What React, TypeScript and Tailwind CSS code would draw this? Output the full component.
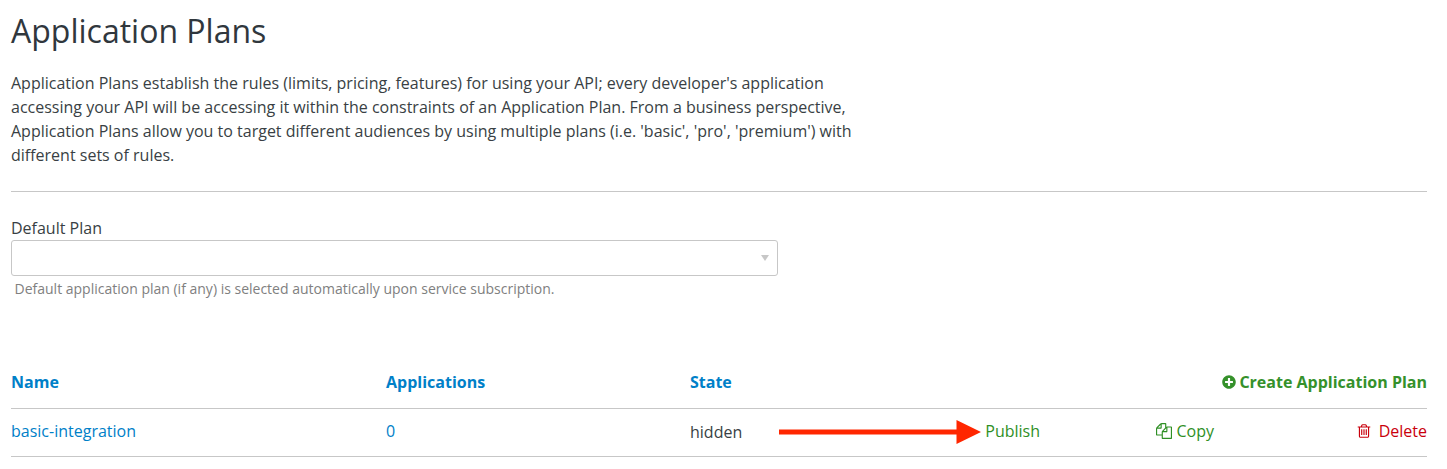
import React from 'react';
import { FaPlusCircle } from 'react-icons/fa';

function CopyIcon() {
  return (
    <svg className="size-4" viewBox="0 0 1792 1792" fill="currentColor" aria-hidden="true">
      <path d="M1696 384q40 0 68 28t28 68v1216q0 40-28 68t-68 28h-960q-40 0-68-28t-28-68v-288h-544q-40 0-68-28t-28-68v-672q0-40 20-88t48-76l408-408q28-28 76-48t88-20h416q40 0 68 28t28 68v328q68-40 128-40h416zm-544 213l-299 299h299v-299zm-640-384l-299 299h299v-299zm196 647l316-316v-416h-384v416q0 40-28 68t-68 28h-416v640h512v-256q0-40 20-88t48-76zm956 804v-1152h-384v416q0 40-28 68t-68 28h-416v640h896z" />
    </svg>
  );
}

function TrashIcon() {
  return (
    <svg className="size-4" viewBox="0 0 1792 1792" fill="currentColor" aria-hidden="true">
      <path d="M704 736v576q0 14-9 23t-23 9h-64q-14 0-23-9t-9-23v-576q0-14 9-23t23-9h64q14 0 23 9t9 23zm256 0v576q0 14-9 23t-23 9h-64q-14 0-23-9t-9-23v-576q0-14 9-23t23-9h64q14 0 23 9t9 23zm256 0v576q0 14-9 23t-23 9h-64q-14 0-23-9t-9-23v-576q0-14 9-23t23-9h64q14 0 23 9t9 23zm128 724v-948h-896v948q0 22 7 40.500t14.500 27 10.500 8.500h832q3 0 10.500-8.500t14.500-27 7-40.500zm-672-1076h448l-48-117q-7-9-17-11h-317q-10 2-17 11zm928 32v64q0 14-9 23t-23 9h-96v948q0 83-47 143.500t-113 60.500h-832q-66 0-113-58.500t-47-141.500v-952h-96q-14 0-23-9t-9-23v-64q0-14 9-23t23-9h309l70-167q15-37 54-63t79-26h320q40 0 79 26t54 63l70 167h309q14 0 23 9t9 23z" />
    </svg>
  );
}

export default function App() {
  return (
    <main className="h-[469px] overflow-hidden bg-white pl-[11px] pr-5 pt-2 font-['Open_Sans',sans-serif] text-base leading-6 text-[#393f44]">
      <h1 className="h-[63px] text-[32px] leading-[46px] text-[#30373d]">Application Plans</h1>
      <p className="whitespace-nowrap">
        Application Plans establish the rules (limits, pricing, features) for using your API; every developer's application<br />
        accessing your API will be accessing it within the constraints of an Application Plan. From a business perspective,<br />
        Application Plans allow you to target different audiences by using multiple plans (i.e. 'basic', 'pro', 'premium') with<br />
        different sets of rules.
      </p>
      <hr className="mt-6 border-[#c7c7c7]" />
      <label className="mt-6 block">Default Plan</label>
      <div className="flex h-9 w-[767px] items-center justify-end rounded-[3px] border border-[#c7c7c7] pr-2">
        <svg className="h-[6px] w-2" viewBox="0 0 8 6" aria-hidden="true"><path d="M0 0h8L4 6z" fill="#c7c7c7" /></svg>
      </div>
      <p className="ml-[3.5px] text-sm leading-[26px] text-[#808080]">Default application plan (if any) is selected automatically upon service subscription.</p>
      <div className="mt-[57px] grid h-[50px] grid-cols-[375px_304px_1fr_auto] items-center border-b border-[#c7c7c7] pb-[3px] font-bold text-[#0080c8]">
        <span>Name</span><span>Applications</span><span>State</span>
        <span className="flex items-center gap-[3px] text-[#35912b]"><FaPlusCircle className="size-[14px]" />Create Application Plan</span>
      </div>
      <div className="grid h-12 grid-cols-[375px_304px_89px_206.3px_170.7px_1fr] items-center border-b border-[#c7c7c7] pb-[3px] text-[#2f8f25]">
        <span className="text-[#0080c8]">basic-integration</span>
        <span className="text-[#0080c8]">0</span>
        <span className="pt-0.5 text-[#393f44]">hidden</span>
        <svg className="mt-0.5 h-6 w-[203px]" viewBox="0 0 203 24" aria-hidden="true"><path d="M0 9.500h177.500V0L202 12l-24.500 12v-9.500H0z" fill="#ff2600" /></svg>
        <span>Publish</span>
        <span className="flex items-center justify-between"><span className="flex items-center gap-[4.5px]"><CopyIcon />Copy</span><span className="flex items-center gap-[7px] text-[#c9000c]"><TrashIcon />Delete</span></span>
      </div>
    </main>
  );
}
